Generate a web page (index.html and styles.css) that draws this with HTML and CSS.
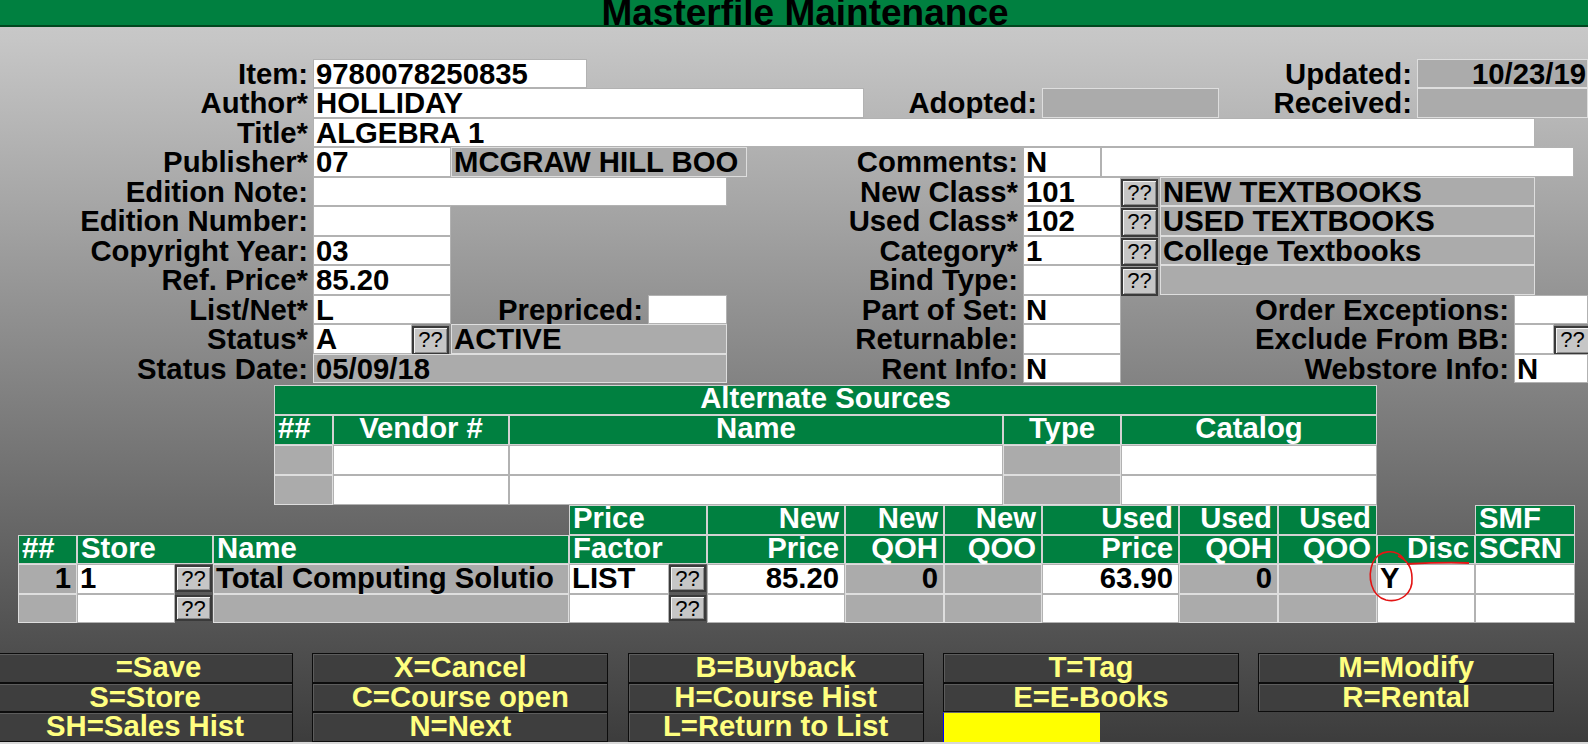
FILE: index.html
```html
<!DOCTYPE html>
<html>
<head>
<meta charset="utf-8">
<title>Masterfile Maintenance</title>
<link rel="stylesheet" href="styles.css">
</head>
<body>
<div class="hdr">Masterfile Maintenance</div>

<div class="form">
  <div class="l r1 c1-2">Item:</div>
  <div class="w r1 c2-5">9780078250835</div>
  <div class="l r1 c15-16">Updated:</div>
  <div class="g r1 c16-21 ra tight">10/23/19</div>

  <div class="l r2 c1-2">Author*</div>
  <div class="w r2 c2-9">HOLLIDAY</div>
  <div class="l r2 c9-11">Adopted:</div>
  <div class="g r2 c11-15"></div>
  <div class="l r2 c15-16">Received:</div>
  <div class="g r2 c16-21"></div>

  <div class="l r3 c1-2">Title*</div>
  <div class="w r3 c2-18">ALGEBRA 1</div>

  <div class="l r4 c1-2">Publisher*</div>
  <div class="w r4 c2-4">07</div>
  <div class="g r4 c4-8">MCGRAW HILL BOO</div>
  <div class="l r4 c8-10">Comments:</div>
  <div class="w r4 c10-12">N</div>
  <div class="w r4 c12-20"></div>

  <div class="l r5 c1-2">Edition Note:</div>
  <div class="w r5 c2-7"></div>
  <div class="l r5 c8-10">New Class*</div>
  <div class="w r5 c10-13">101</div>
  <div class="qq r5 c13-14">??</div>
  <div class="g r5 c14-18">NEW TEXTBOOKS</div>

  <div class="l r6 c1-2">Edition Number:</div>
  <div class="w r6 c2-4"></div>
  <div class="l r6 c8-10">Used Class*</div>
  <div class="w r6 c10-13">102</div>
  <div class="qq r6 c13-14">??</div>
  <div class="g r6 c14-18">USED TEXTBOOKS</div>

  <div class="l r7 c1-2">Copyright Year:</div>
  <div class="w r7 c2-4">03</div>
  <div class="l r7 c8-10">Category*</div>
  <div class="w r7 c10-13">1</div>
  <div class="qq r7 c13-14">??</div>
  <div class="g r7 c14-18">College Textbooks</div>

  <div class="l r8 c1-2">Ref. Price*</div>
  <div class="w r8 c2-4">85.20</div>
  <div class="l r8 c8-10">Bind Type:</div>
  <div class="w r8 c10-13"></div>
  <div class="qq r8 c13-14">??</div>
  <div class="g r8 c14-18"></div>

  <div class="l r9 c1-2">List/Net*</div>
  <div class="w r9 c2-4">L</div>
  <div class="l r9 c4-6">Prepriced:</div>
  <div class="w r9 c6-7"></div>
  <div class="l r9 c8-10">Part of Set:</div>
  <div class="w r9 c10-13">N</div>
  <div class="l r9 c13-17">Order Exceptions:</div>
  <div class="w r9 c17-21"></div>

  <div class="l r10 c1-2">Status*</div>
  <div class="w r10 c2-3">A</div>
  <div class="qq r10 c3-4">??</div>
  <div class="g r10 c4-7">ACTIVE</div>
  <div class="l r10 c8-10">Returnable:</div>
  <div class="w r10 c10-13"></div>
  <div class="l r10 c13-17">Exclude From BB:</div>
  <div class="w r10 c17-19"></div>
  <div class="qq r10 c19-21 wide">??</div>

  <div class="l r11 c1-2">Status Date:</div>
  <div class="g r11 c2-7">05/09/18</div>
  <div class="l r11 c8-10">Rent Info:</div>
  <div class="w r11 c10-13">N</div>
  <div class="l r11 c13-17">Webstore Info:</div>
  <div class="w r11 c17-21">N</div>
</div>

<div class="alt tbl">
  <div class="h span-all ctr">Alternate Sources</div>
  <div class="h">##</div>
  <div class="h ctr">Vendor #</div>
  <div class="h ctr">Name</div>
  <div class="h ctr">Type</div>
  <div class="h ctr">Catalog</div>

  <div class="g"></div>
  <div class="w"></div>
  <div class="w"></div>
  <div class="g"></div>
  <div class="w"></div>

  <div class="g"></div>
  <div class="w"></div>
  <div class="w"></div>
  <div class="g"></div>
  <div class="w"></div>
</div>

<div class="stores tbl">
  <div class="blank"></div>
  <div class="blank"></div>
  <div class="blank"></div>
  <div class="h">Price</div>
  <div class="h ra">New</div>
  <div class="h ra">New</div>
  <div class="h ra">New</div>
  <div class="h ra">Used</div>
  <div class="h ra">Used</div>
  <div class="h ra">Used</div>
  <div class="blank"></div>
  <div class="h">SMF</div>

  <div class="h">##</div>
  <div class="h">Store</div>
  <div class="h">Name</div>
  <div class="h">Factor</div>
  <div class="h ra">Price</div>
  <div class="h ra">QOH</div>
  <div class="h ra">QOO</div>
  <div class="h ra">Price</div>
  <div class="h ra">QOH</div>
  <div class="h ra">QOO</div>
  <div class="h ra">Disc</div>
  <div class="h">SCRN</div>

  <div class="g ra">1</div>
  <div class="cmb"><div class="w">1</div><div class="qq tq">??</div></div>
  <div class="g">Total Computing Solutio</div>
  <div class="cmb"><div class="w">LIST</div><div class="qq tq">??</div></div>
  <div class="w ra">85.20</div>
  <div class="g ra">0</div>
  <div class="g"></div>
  <div class="w ra">63.90</div>
  <div class="g ra">0</div>
  <div class="g"></div>
  <div class="w">Y</div>
  <div class="w"></div>

  <div class="g"></div>
  <div class="cmb"><div class="w"></div><div class="qq tq">??</div></div>
  <div class="g"></div>
  <div class="cmb"><div class="w"></div><div class="qq tq">??</div></div>
  <div class="w"></div>
  <div class="g"></div>
  <div class="g"></div>
  <div class="w"></div>
  <div class="g"></div>
  <div class="g"></div>
  <div class="w"></div>
  <div class="w"></div>
</div>

<div class="btns">
  <div class="b save">=Save</div>
  <div class="b">X=Cancel</div>
  <div class="b">B=Buyback</div>
  <div class="b">T=Tag</div>
  <div class="b">M=Modify</div>
  <div class="b">S=Store</div>
  <div class="b">C=Course open</div>
  <div class="b">H=Course Hist</div>
  <div class="b">E=E-Books</div>
  <div class="b">R=Rental</div>
  <div class="b">SH=Sales Hist</div>
  <div class="b">N=Next</div>
  <div class="b">L=Return to List</div>
  <div class="yel"></div>
</div>
<div class="foot"></div>

<svg class="mark" width="1588" height="744" viewBox="0 0 1588 744">
  <path d="M1404 559 C1396 548 1379 550 1373 562 C1367 577 1371 596 1386 600 C1401 603 1413 593 1412 578 C1412 567 1407 560 1398 556" fill="none" stroke="#e31414" stroke-width="1.6"/>
  <path d="M1407 564 C1425 563 1450 562 1469 563" fill="none" stroke="#e31414" stroke-width="1.8"/>
</svg>
</body>
</html>
```

FILE: styles.css
```css
* { box-sizing: border-box; margin: 0; padding: 0; }

html, body { width: 1588px; height: 744px; overflow: hidden; }

body {
  position: relative;
  display: flex;
  flex-direction: column;
  background: linear-gradient(180deg, #cbcbcb 0px, #c6c6c6 40px, #3c3c3c 744px);
  font-family: "Liberation Sans", Arial, sans-serif;
  font-weight: bold;
  font-size: 29.3px;
  color: #000;
}

.hdr {
  flex: none;
  height: 27px;
  background: #008040;
  border-bottom: 2px solid #00471f;
  text-align: center;
  font-size: 37px;
  line-height: 25.5px;
  padding-left: 22px;
  white-space: nowrap;
}

/* ---------- upper form ---------- */
.form {
  flex: none;
  margin-top: 31.5px;
  display: grid;
  grid-template-columns: 313px 99px 39px 136px 61px 79px 20px 117px 159px 19px 59px 20px 39px 59px 198px 97px 21px 19px 20px 14px;
  grid-template-rows: repeat(11, 29.5px);
}

.l {
  text-align: right;
  padding-right: 5px;
  line-height: 29.5px;
  white-space: nowrap;
}

.w, .g {
  border: 1px solid;
  line-height: 27.5px;
  padding: 0 3px 0 2px;
  white-space: nowrap;
}
.w { background: #fff; border-color: #b2b2b2; }
.g { background: #ababab; border-color: #dedede; }
.ra { text-align: right; padding-right: 5px; }
.ra.tight { padding-right: 1px; }
.ctr { text-align: center; }

.qq {
  background: #c6c6c6;
  border: 2px solid #3a3a3a;
  box-shadow: inset 1px 1px 0 #f4f4f4, inset -1px -1px 0 #8a8a8a;
  font-weight: normal;
  font-size: 22px;
  line-height: 23px;
  text-align: center;
  margin: 2px 2px -1px 0;
}
.qq.wide { width: 37px; }

.r1 { grid-row: 1; } .r2 { grid-row: 2; } .r3 { grid-row: 3; } .r4 { grid-row: 4; }
.r5 { grid-row: 5; } .r6 { grid-row: 6; } .r7 { grid-row: 7; } .r8 { grid-row: 8; }
.r9 { grid-row: 9; } .r10 { grid-row: 10; } .r11 { grid-row: 11; }

.c1-2 { grid-column: 1 / 2; }
.c2-3 { grid-column: 2 / 3; }
.c2-4 { grid-column: 2 / 4; }
.c2-5 { grid-column: 2 / 5; }
.c2-7 { grid-column: 2 / 7; }
.c2-9 { grid-column: 2 / 9; }
.c2-18 { grid-column: 2 / 18; }
.c3-4 { grid-column: 3 / 4; }
.c4-6 { grid-column: 4 / 6; }
.c4-7 { grid-column: 4 / 7; }
.c4-8 { grid-column: 4 / 8; }
.c6-7 { grid-column: 6 / 7; }
.c8-10 { grid-column: 8 / 10; }
.c9-11 { grid-column: 9 / 11; }
.c10-12 { grid-column: 10 / 12; }
.c10-13 { grid-column: 10 / 13; }
.c11-15 { grid-column: 11 / 15; }
.c12-20 { grid-column: 12 / 20; }
.c13-14 { grid-column: 13 / 14; }
.c13-17 { grid-column: 13 / 17; }
.c14-18 { grid-column: 14 / 18; }
.c15-16 { grid-column: 15 / 16; }
.c16-21 { grid-column: 16 / 21; }
.c17-19 { grid-column: 17 / 19; }
.c17-21 { grid-column: 17 / 21; }
.c19-21 { grid-column: 19 / 21; }

/* ---------- tables ---------- */
.tbl { flex: none; display: grid; }

.h {
  background: #008040;
  color: #fff;
  border: 1px solid #d2d2d2;
  line-height: 24px;
  padding: 0 3px;
  white-space: nowrap;
}
.h.ra { padding-right: 5px; }

.tbl .w, .tbl .g { line-height: 26px; }

.alt {
  margin-top: 2px;
  margin-left: 274px;
  width: 1103px;
  grid-template-columns: 59px 176px 494px 118px 256px;
  grid-auto-rows: 30px;
}
.span-all { grid-column: 1 / -1; }

.stores {
  margin-left: 18px;
  width: 1557px;
  grid-template-columns: 59px 136px 356px 138px 138px 99px 98px 137px 99px 99px 98px 100px;
  grid-auto-rows: 29.5px;
}

.cmb { display: flex; }
.cmb .w { flex: 1; }
.qq.tq { width: 37px; flex: none; margin: 1px 1px 2px 0; }

/* ---------- function keys ---------- */
.btns {
  flex: none;
  margin-top: 30px;
  margin-left: -3px;
  display: grid;
  grid-template-columns: repeat(5, 296px);
  column-gap: 19.3px;
  grid-auto-rows: 29.5px;
}

.b {
  background: #3e3e3e;
  border: 1px solid #0c0c0c;
  box-shadow: inset 1px 1px 0 #5c5c5c;
  color: #ffff80;
  text-align: center;
  line-height: 25px;
  white-space: nowrap;
}
.b.save { padding-left: 27px; }

.yel {
  width: 157px;
  background: #ffff00;
  border-left: 1px solid #0000ff;
  border-top: 1px solid #6a6a6a;
}

.foot {
  flex: none;
  margin-top: 0.5px;
  height: 2px;
  background: #d8d8d8;
}

.mark {
  position: absolute;
  left: 0;
  top: 0;
  pointer-events: none;
}
```
